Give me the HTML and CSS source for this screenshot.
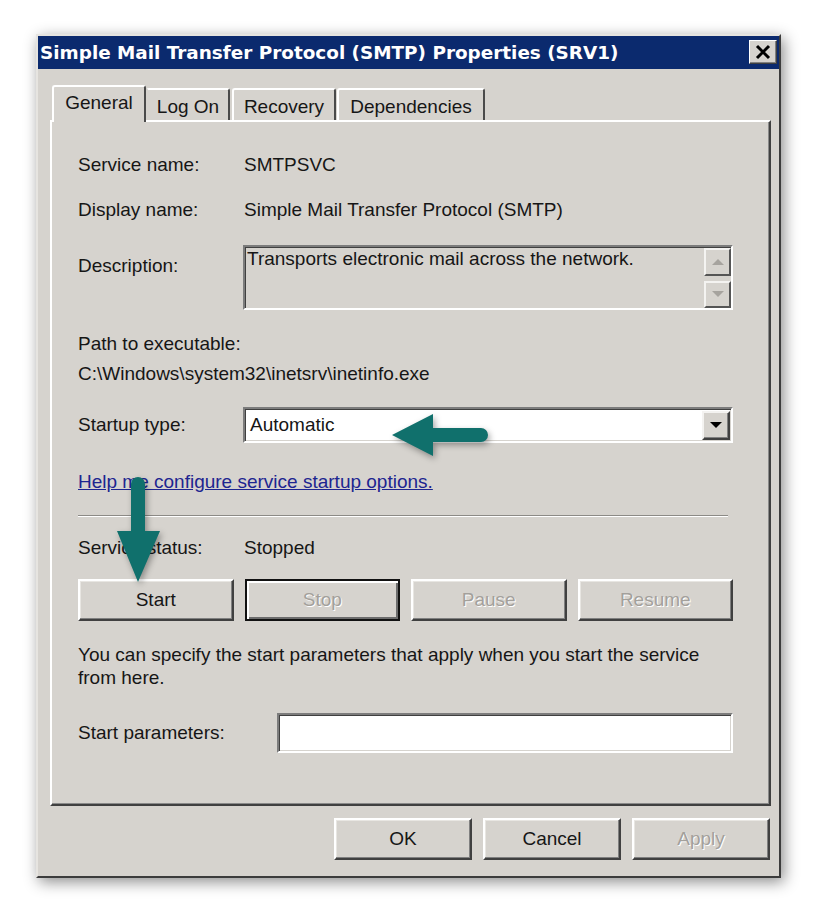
FILE: index.html
```html
<!DOCTYPE html>
<html>
<head>
<meta charset="utf-8">
<link rel="stylesheet" href="styles.css">
</head>
<body>
<div class="page">
  <div class="window">
    <div class="titlebar">
      <span class="title">Simple Mail Transfer Protocol (SMTP) Properties (SRV1)</span>
      <span class="close"><svg width="18" height="16" viewBox="0 0 18 16"><path d="M3 2 L15 14 M15 2 L3 14" stroke="#000" stroke-width="3"/></svg></span>
    </div>
    <div class="client">
      <div class="tabs">
        <div class="tab active t-general">General</div>
        <div class="tab t-logon">Log On</div>
        <div class="tab t-recovery">Recovery</div>
        <div class="tab t-deps">Dependencies</div>
      </div>
      <div class="panel">
        <div class="row r-name"><span class="label">Service name:</span><span>SMTPSVC</span></div>
        <div class="row r-display"><span class="label">Display name:</span><span>Simple Mail Transfer Protocol (SMTP)</span></div>
        <div class="row r-desc">
          <span class="label desc-label">Description:</span>
          <div class="descbox sunken">
            <span class="desc-text">Transports electronic mail across the network.</span>
            <div class="scroll">
              <div class="sbtn"><svg width="14" height="8" viewBox="0 0 14 8"><path d="M1 7 L7 1 L13 7 Z" fill="#a6a39e"/></svg></div>
              <div class="sbtn"><svg width="14" height="8" viewBox="0 0 14 8"><path d="M1 1 L7 7 L13 1 Z" fill="#a6a39e"/></svg></div>
            </div>
          </div>
        </div>
        <div class="path">
          <div class="line">Path to executable:</div>
          <div class="line">C:\Windows\system32\inetsrv\inetinfo.exe</div>
        </div>
        <div class="row r-startup">
          <span class="label">Startup type:</span>
          <div class="select sunken">
            <span class="sel-text">Automatic</span>
            <div class="ddbtn"><svg width="14" height="8" viewBox="0 0 14 8"><path d="M1 1 L7 7 L13 1 Z" fill="#000"/></svg></div>
          </div>
        </div>
        <div class="row r-link"><span class="link">Help me configure service startup options.</span></div>
        <div class="sep"></div>
        <div class="row r-status"><span class="label">Service status:</span><span>Stopped</span></div>
        <div class="svcbtns">
          <div class="btn">Start</div>
          <div class="btn disabled focus">Stop</div>
          <div class="btn disabled">Pause</div>
          <div class="btn disabled">Resume</div>
        </div>
        <div class="note">You can specify the start parameters that apply when you start the service<br>from here.</div>
        <div class="row r-params">
          <span class="plabel">Start parameters:</span>
          <div class="input sunken"></div>
        </div>
      </div>
      <div class="footer">
        <div class="btn fbtn">OK</div>
        <div class="btn fbtn">Cancel</div>
        <div class="btn fbtn disabled">Apply</div>
      </div>
    </div>
  </div>
  <svg class="arrow arrow-left" width="110" height="60" viewBox="0 0 110 60"><path d="M7 30 L48 9 L48 23 L96 23 A7 7 0 0 1 96 37 L48 37 L48 51 Z" fill="#10706c"/></svg>
  <svg class="arrow arrow-down" width="60" height="120" viewBox="0 0 60 120"><path d="M21 14 A7 7 0 0 1 35 14 L35 61 L50 61 L28 112 L7 61 L21 61 Z" fill="#10706c"/></svg>
</div>
</body>
</html>
```

FILE: styles.css
```css
html, body {
  margin: 0;
  background: #ffffff;
}
body {
  font-family: "Liberation Sans", Arial, sans-serif;
  font-size: 19px;
  color: #161616;
}
.page {
  position: relative;
  width: 816px;
  height: 915px;
  padding: 34px 0 0 36px;
  box-sizing: border-box;
}
.window {
  width: 745px;
  height: 844px;
  box-sizing: border-box;
  background: #d6d3ce;
  border: 2px solid;
  border-color: #e6e4e0 #3c3c3c #3c3c3c #e6e4e0;
  box-shadow: 3px 4px 14px rgba(0, 0, 0, 0.45);
  display: flex;
  flex-direction: column;
}
.titlebar {
  height: 33px;
  background: #0b2a6e;
  display: flex;
  align-items: center;
  justify-content: space-between;
  padding: 0 2px 0 2px;
  flex-shrink: 0;
}
.title {
  color: #ffffff;
  font-family: "DejaVu Sans", Verdana, sans-serif;
  font-weight: bold;
  font-size: 18.4px;
  white-space: nowrap;
}
.close {
  width: 28px;
  height: 24px;
  box-sizing: border-box;
  background: #d6d3ce;
  border: 1px solid;
  border-color: #ffffff #404040 #404040 #ffffff;
  box-shadow: inset -1px -1px #808080;
  display: flex;
  align-items: center;
  justify-content: center;
  margin-top: -1px;
}
.client {
  padding: 16px 8px 0 12px;
  display: flex;
  flex-direction: column;
}
.tabs {
  display: flex;
  align-items: flex-end;
  height: 35px;
  padding-left: 2px;
}
.tab {
  height: 32px;
  box-sizing: border-box;
  border-top: 2px solid #ffffff;
  border-left: 2px solid #ffffff;
  border-right: 2px solid #4a4a4a;
  border-radius: 3px 3px 0 0;
  display: flex;
  align-items: center;
  justify-content: center;
  background: #d6d3ce;
  padding-top: 3px;
}
.tab.active {
  height: 37px;
  margin-bottom: -2px;
  position: relative;
  z-index: 1;
  padding-top: 0;
  padding-bottom: 4px;
}
.t-general { width: 94px; }
.t-logon { width: 84px; border-left-color: #d6d3ce; }
.t-recovery { width: 104px; margin-left: 2px; }
.t-deps { width: 148px; margin-left: 1px; }
.panel {
  height: 686px;
  box-sizing: border-box;
  border: 2px solid;
  border-color: #ffffff #404040 #404040 #ffffff;
  box-shadow: inset -1px -1px #8a8a8a;
  padding: 0 36px 0 26px;
  display: flex;
  flex-direction: column;
}
.row {
  display: flex;
  align-items: center;
}
.label {
  width: 166px;
  flex-shrink: 0;
}
.r-name { height: 24px; margin-top: 31px; }
.r-display { height: 24px; margin-top: 21px; }
.r-desc { height: 65px; margin-top: 23px; align-items: flex-start; }
.desc-label { padding-top: 10px; }
.sunken {
  box-sizing: border-box;
  border: 2px solid;
  border-color: #7c7c7c #ffffff #ffffff #7c7c7c;
  box-shadow: inset 1px 1px #404040, inset -1px -1px #d6d3ce;
}
.descbox {
  flex: 1;
  height: 65px;
  margin-left: -1px;
  display: flex;
  justify-content: space-between;
  padding: 1px 0 0 2px;
}
.desc-text {
  line-height: 22px;
}
.scroll {
  width: 27px;
  display: flex;
  flex-direction: column;
  gap: 5px;
}
.sbtn {
  height: 28px;
  box-sizing: border-box;
  background: #d6d3ce;
  border: 2px solid;
  border-color: #f4f3f1 #555555 #555555 #f4f3f1;
  display: flex;
  align-items: center;
  justify-content: center;
}
.path { margin-top: 22px; }
.path .line { height: 24px; line-height: 24px; }
.path .line + .line { margin-top: 6px; }
.r-startup { height: 36px; margin-top: 21px; }
.select {
  flex: 1;
  height: 36px;
  margin-left: -1px;
  background: #ffffff;
  display: flex;
  align-items: center;
  justify-content: space-between;
  padding: 0 1px 0 5px;
}
.ddbtn {
  width: 28px;
  height: 29px;
  box-sizing: border-box;
  background: #d6d3ce;
  border: 2px solid;
  border-color: #f4f3f1 #404040 #404040 #f4f3f1;
  box-shadow: inset -1px -1px #808080;
  display: flex;
  align-items: center;
  justify-content: center;
}
.r-link { height: 24px; margin-top: 27px; }
.link {
  color: #1d2590;
  text-decoration: underline;
}
.sep {
  margin-top: 21px;
  margin-right: 5px;
  border-top: 1px solid #8c8a86;
  border-bottom: 1px solid #ffffff;
}
.r-status { height: 24px; margin-top: 19px; }
.svcbtns {
  margin-top: 19px;
  display: grid;
  grid-template-columns: repeat(4, 1fr);
  gap: 11px;
}
.btn {
  height: 42px;
  box-sizing: border-box;
  background: #d6d3ce;
  border: 2px solid;
  border-color: #ffffff #404040 #404040 #ffffff;
  box-shadow: inset -1px -1px #808080, inset 1px 1px #e8e6e2;
  display: flex;
  align-items: center;
  justify-content: center;
  color: #161616;
}
.btn.disabled {
  color: #a3a09b;
  text-shadow: 1px 1px 0 #ffffff;
}
.btn.focus {
  border-color: #111111;
  box-shadow: inset 2px 2px #ffffff, inset -2px -2px #6c6c6c;
}
.note {
  margin-top: 22px;
  line-height: 23px;
}
.r-params { height: 40px; margin-top: 24px; }
.plabel { width: 199px; flex-shrink: 0; }
.input {
  flex: 1;
  height: 40px;
  background: #ffffff;
}
.footer {
  display: flex;
  justify-content: flex-end;
  gap: 11px;
  padding: 12px 1px 0 0;
}
.fbtn { width: 138px; }
.arrow {
  position: absolute;
  filter: drop-shadow(2px 3px 3px rgba(0, 0, 0, 0.35));
}
.arrow-left { left: 385px; top: 405px; }
.arrow-down { left: 110px; top: 470px; }
```
